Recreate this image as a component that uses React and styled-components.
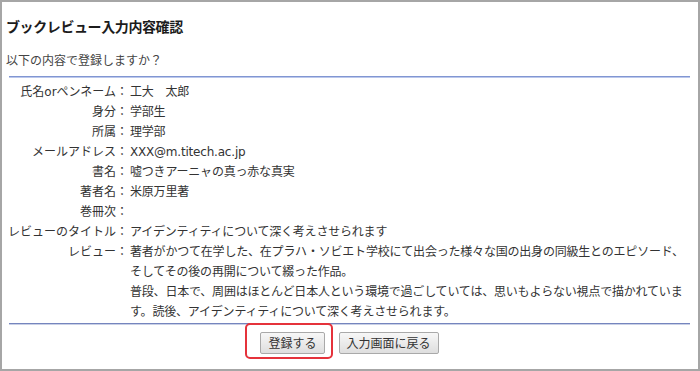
import React from 'react';
import styled, { createGlobalStyle } from 'styled-components';

const GlobalStyle = createGlobalStyle`
  html, body {
    margin: 0;
    padding: 0;
    background: #ffffff;
  }
  body {
    font-family: "DejaVu Sans", "Noto Sans CJK JP", sans-serif;
    color: #333333;
  }
`;

const Frame = styled.div`
  box-sizing: border-box;
  width: 700px;
  height: 371px;
  border: 2px solid #a6a6a6;
  padding: 0 8px 0 4px;
  background: #ffffff;
  overflow: hidden;
`;

const Title = styled.h1`
  margin: 15px 0 0;
  font-size: 14px;
  line-height: 20px;
  font-weight: bold;
  letter-spacing: -0.4px;
  color: #1c1c1c;
`;

const Lead = styled.p`
  margin: 14px 0 0;
  font-size: 12px;
  line-height: 20px;
  color: #444444;
`;

const Rule = styled.hr`
  margin: ${p => p.$top || 0}px 0 0 3px;
  border: none;
  border-top: 1px solid ${p => p.$dark};
  border-bottom: 1px solid ${p => p.$light};
  height: 0;
`;

const Table = styled.div`
  display: grid;
  grid-template-columns: 110px 14px 1fr;
  margin-top: 4px;
  font-size: 12px;
  line-height: 20px;
`;

const Label = styled.div`
  text-align: right;
  white-space: nowrap;
  color: #333333;
`;

const Colon = styled.div`
  text-align: left;
`;

const Value = styled.div`
  letter-spacing: -0.2px;
  color: #333333;
`;

const Actions = styled.div`
  display: flex;
  justify-content: center;
  gap: 14px;
  margin-top: 7px;
  margin-left: 3px;
`;

const Marked = styled.div`
  position: relative;
  display: flex;
`;

const Highlight = styled.span`
  position: absolute;
  top: -9px;
  left: -15px;
  right: -8px;
  bottom: -5px;
  border: 2px solid #e5323b;
  border-radius: 5px;
  pointer-events: none;
`;

const Button = styled.button`
  height: 22px;
  padding: 0 7px;
  font-family: "Noto Sans CJK JP", sans-serif;
  font-size: 12px;
  line-height: 20px;
  color: #333333;
  border: 1px solid #a9a9a9;
  border-radius: 2px;
  background: linear-gradient(#f7f7f7, #dedede);
  cursor: pointer;
`;

const rows = [
  ['氏名orペンネーム', '工大　太郎'],
  ['身分', '学部生'],
  ['所属', '理学部'],
  ['メールアドレス', 'XXX@m.titech.ac.jp'],
  ['書名', '嘘つきアーニャの真っ赤な真実'],
  ['著者名', '米原万里著'],
  ['巻冊次', ''],
  ['レビューのタイトル', 'アイデンティティについて深く考えさせられます'],
];

export default function App() {
  return (
    <>
      <GlobalStyle />
      <Frame>
        <Title>ブックレビュー入力内容確認</Title>
        <Lead>以下の内容で登録しますか？</Lead>
        <Rule $top={5} $dark="#8196d2" $light="#bcc8ec" />
        <Table>
          {rows.map(([label, value]) => (
            <React.Fragment key={label}>
              <Label>{label}</Label>
              <Colon>：</Colon>
              <Value>{value}</Value>
            </React.Fragment>
          ))}
          <Label>レビュー</Label>
          <Colon>：</Colon>
          <Value>
            著者がかつて在学した、在プラハ・ソビエト学校にて出会った様々な国の出身の同級生とのエピソード、
            <br />
            そしてその後の再開について綴った作品。
            <br />
            普段、日本で、周囲はほとんど日本人という環境で過ごしていては、思いもよらない視点で描かれています。読後、アイデンティティについて深く考えさせられます。
          </Value>
        </Table>
        <Rule $top={1} $dark="#7585be" $light="#c9d0e6" />
        <Actions>
          <Marked>
            <Button>登録する</Button>
            <Highlight />
          </Marked>
          <Button>入力画面に戻る</Button>
        </Actions>
      </Frame>
    </>
  );
}
